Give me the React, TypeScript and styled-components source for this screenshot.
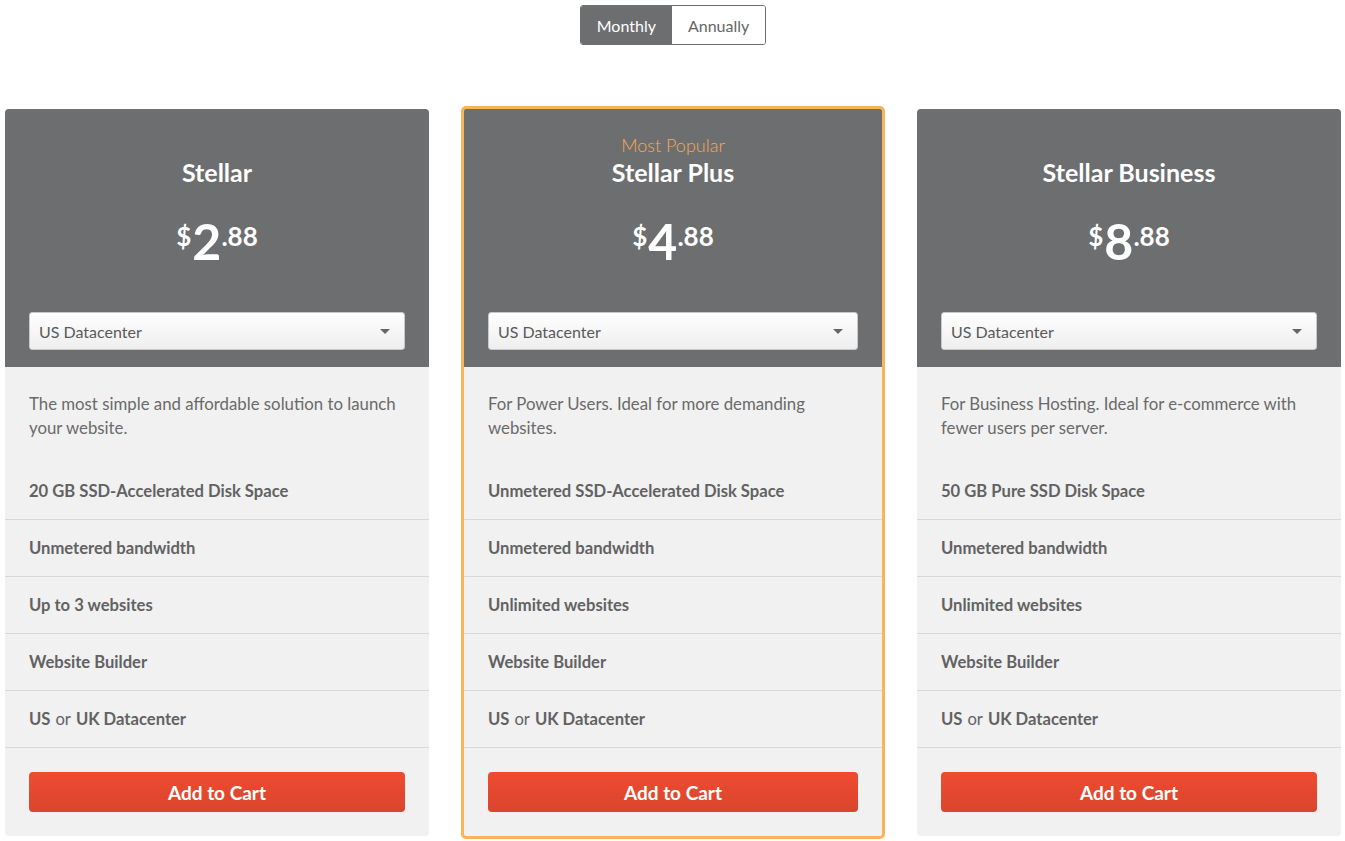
import React, { FC, useState } from "react";
import styled, { createGlobalStyle, css } from "styled-components";

const GlobalStyle = createGlobalStyle`
  html, body {
    margin: 0;
    padding: 0;
    background: #ffffff;
  }
  body {
    font-family: Lato, "Open Sans", "Liberation Sans", sans-serif;
    color: #666666;
  }
`;

const Page = styled.div`
  padding: 5px 4px 0 5px;
  display: flex;
  flex-direction: column;
  align-items: center;
`;

const Toggle = styled.div`
  display: flex;
  border: 1px solid #6d6e70;
  border-radius: 3px;
  overflow: hidden;
`;

const ToggleButton = styled.button<{ active?: boolean }>`
  height: 38px;
  padding: 0 16px;
  border: none;
  font-family: inherit;
  font-size: 16px;
  cursor: pointer;
  background: ${({ active }) => (active ? "#6d6e70" : "#ffffff")};
  color: ${({ active }) => (active ? "#ffffff" : "#666666")};
`;

const Cards = styled.div`
  margin-top: 64px;
  width: 100%;
  display: grid;
  grid-template-columns: repeat(3, 424px);
  column-gap: 32px;
  align-items: start;
`;

const Card = styled.div<{ featured?: boolean }>`
  border-radius: 4px;
  overflow: hidden;
  background: #f1f1f1;
  ${({ featured }) =>
    featured &&
    css`
      border: 3px solid #f9b45a;
      border-radius: 5px;
      margin-top: -3px;
    `}
`;

const Header = styled.div`
  background: #6d6e70;
  padding: 25px 24px 17px;
  text-align: center;
`;

const Label = styled.div`
  height: 24px;
  line-height: 22px;
  font-size: 18px;
  font-weight: 300;
  color: #f4a957;
`;

const Title = styled.h2`
  margin: 0;
  font-size: 25px;
  line-height: 28px;
  font-weight: 700;
  color: #ffffff;
`;

const Price = styled.div`
  margin: 34px 0 0;
  height: 92px;
  display: flex;
  justify-content: center;
  align-items: flex-start;
  color: #ffffff;
  font-weight: 700;
`;

const Currency = styled.span`
  font-size: 26px;
  line-height: 26px;
  margin-top: 3px;
`;

const Whole = styled.span`
  font-size: 50px;
  line-height: 50px;
  margin-top: -4px;
  margin-left: 1px;
`;

const Cents = styled.span`
  font-size: 26px;
  line-height: 26px;
  margin-top: 3px;
`;

const SelectBox = styled.div`
  height: 38px;
  box-sizing: border-box;
  border: 1px solid #c9c9c9;
  border-radius: 3px;
  background: linear-gradient(#ffffff, #eeeeee);
  display: flex;
  align-items: center;
  justify-content: space-between;
  padding: 0 14px 0 9px;
  font-size: 16px;
  color: #5a5a5a;
  text-align: left;
`;

const Caret = styled.span`
  width: 0;
  height: 0;
  border-left: 5px solid transparent;
  border-right: 5px solid transparent;
  border-top: 5px solid #666666;
`;

const Body = styled.div`
  padding-top: 25px;
`;

const Description = styled.p`
  margin: 0 0 23px;
  padding: 0 24px;
  font-size: 16.8px;
  line-height: 24px;
  color: #6a6a6a;
`;

const Feature = styled.div`
  height: 57px;
  box-sizing: border-box;
  padding: 0 24px;
  display: flex;
  align-items: center;
  border-bottom: 1px solid #d8d8d8;
  font-size: 16.6px;
  font-weight: 700;
  color: #626262;
`;

const Or = styled.span`
  font-weight: 400;
  margin: 0 5px;
`;

const Footer = styled.div`
  padding: 24px;
`;

const CartButton = styled.button`
  width: 100%;
  height: 40px;
  border: none;
  border-radius: 4px;
  background: linear-gradient(#ef4b30, #d9452e);
  color: #ffffff;
  font-family: inherit;
  font-size: 19px;
  font-weight: 700;
  cursor: pointer;
`;

interface IPlan {
  name: string;
  whole: string;
  cents: string;
  description: string;
  features: string[];
  featured?: boolean;
}

const plans: IPlan[] = [
  {
    name: "Stellar",
    whole: "2",
    cents: ".88",
    description: "The most simple and affordable solution to launch your website.",
    features: [
      "20 GB SSD-Accelerated Disk Space",
      "Unmetered bandwidth",
      "Up to 3 websites",
      "Website Builder",
    ],
  },
  {
    name: "Stellar Plus",
    whole: "4",
    cents: ".88",
    description: "For Power Users. Ideal for more demanding websites.",
    features: [
      "Unmetered SSD-Accelerated Disk Space",
      "Unmetered bandwidth",
      "Unlimited websites",
      "Website Builder",
    ],
    featured: true,
  },
  {
    name: "Stellar Business",
    whole: "8",
    cents: ".88",
    description: "For Business Hosting. Ideal for e-commerce with fewer users per server.",
    features: [
      "50 GB Pure SSD Disk Space",
      "Unmetered bandwidth",
      "Unlimited websites",
      "Website Builder",
    ],
  },
];

const PlanCard: FC<{ plan: IPlan }> = ({ plan }) => (
  <Card featured={plan.featured}>
    <Header>
      <Label>{plan.featured ? "Most Popular" : ""}</Label>
      <Title>{plan.name}</Title>
      <Price>
        <Currency>$</Currency>
        <Whole>{plan.whole}</Whole>
        <Cents>{plan.cents}</Cents>
      </Price>
      <SelectBox>
        US Datacenter
        <Caret />
      </SelectBox>
    </Header>
    <Body>
      <Description>{plan.description}</Description>
      {plan.features.map((f) => (
        <Feature key={f}>{f}</Feature>
      ))}
      <Feature>
        US<Or>or</Or>UK Datacenter
      </Feature>
      <Footer>
        <CartButton>Add to Cart</CartButton>
      </Footer>
    </Body>
  </Card>
);

export default function App() {
  const [period, setPeriod] = useState("monthly");
  return (
    <Page>
      <GlobalStyle />
      <Toggle>
        <ToggleButton active={period === "monthly"} onClick={() => setPeriod("monthly")}>
          Monthly
        </ToggleButton>
        <ToggleButton active={period === "annually"} onClick={() => setPeriod("annually")}>
          Annually
        </ToggleButton>
      </Toggle>
      <Cards>
        {plans.map((p) => (
          <PlanCard key={p.name} plan={p} />
        ))}
      </Cards>
    </Page>
  );
}
